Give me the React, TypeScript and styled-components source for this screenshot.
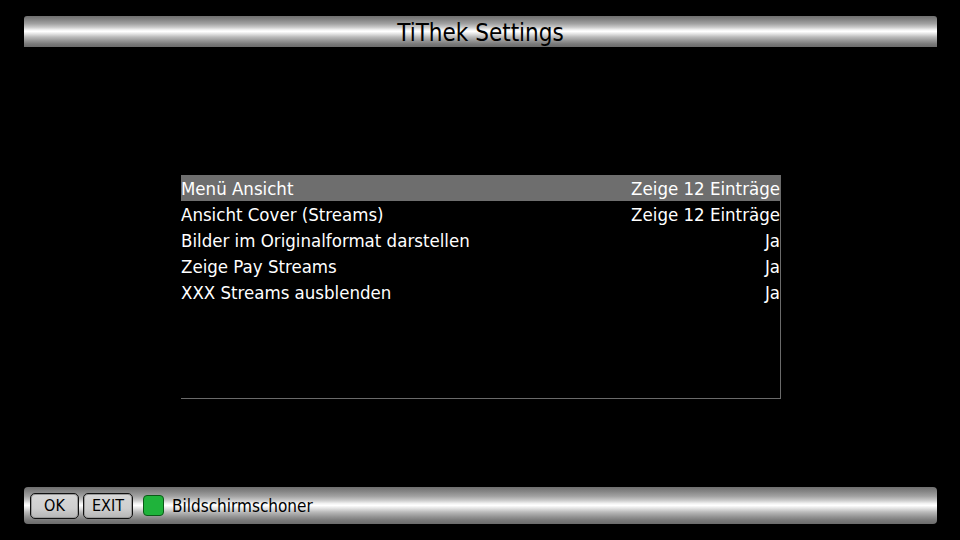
import React from "react";
import styled, { createGlobalStyle } from "styled-components";

const Global = createGlobalStyle`
  html, body { margin: 0; padding: 0; background: #000; }
  body { width: 960px; height: 540px; overflow: hidden; font-family: "DejaVu Sans Condensed", "DejaVu Sans", sans-serif; }
`;

const Screen = styled.div`
  width: 960px;
  height: 540px;
  background: #000;
  display: flex;
  flex-direction: column;
  box-sizing: border-box;
  padding: 16px 23px 16px 24px;
`;

const chrome = `linear-gradient(to bottom,
  #6f6f6f 0%, #858585 12%, #a2a2a2 25%, #c9c9c9 36%, #f4f4f4 45%, #ffffff 50%,
  #e2e2e2 58%, #b9b9b9 68%, #959595 80%, #7a7a7a 90%, #6b6b6b 100%)`;

const TitleBar = styled.div`
  height: 31px;
  background: ${chrome};
  border-radius: 3px 3px 0 0;
  display: flex;
  align-items: center;
  justify-content: center;
`;

const Title = styled.div`
  font-size: 24px;
  color: #000;
  line-height: 31px;
  padding-top: 4px;
`;

const Body = styled.div`
  flex: 1;
  display: flex;
  justify-content: center;
  padding-top: 128px;
`;

const List = styled.div`
  width: 599px;
  height: 223px;
  margin-left: 1px;
  border-right: 1px solid #6a6a6a;
  border-bottom: 1px solid #6a6a6a;
  display: flex;
  flex-direction: column;
`;

const Row = styled.div<{ $active?: boolean }>`
  height: 26px;
  display: flex;
  justify-content: space-between;
  align-items: center;
  background: ${(p) => (p.$active ? "#6e6e6e" : "transparent")};
  color: #fff;
  font-size: 18.5px;
  line-height: 26px;
`;

const Cell = styled.span`
  padding-top: 1px;
`;

const BottomBar = styled.div`
  height: 37px;
  background: ${chrome};
  border-radius: 4px;
  display: flex;
  align-items: center;
  padding-left: 6px;
  gap: 4px;
`;

const Key = styled.div<{ $w: number }>`
  width: ${(p) => p.$w}px;
  height: 26px;
  box-sizing: border-box;
  border: 1px solid #111;
  border-radius: 5px;
  background: linear-gradient(to bottom, #d8d8d8 0%, #cfcfcf 60%, #b5b5b5 100%);
  box-shadow: inset 0 0 0 1px #9a9a9a;
  display: flex;
  align-items: center;
  justify-content: center;
  font-size: 16px;
  color: #000;
`;

const Green = styled.div`
  width: 21px;
  height: 21px;
  margin-left: 6px;
  border-radius: 4px;
  background: #1fb33b;
  border: 1px solid #0b5a18;
  box-sizing: border-box;
`;

const Label = styled.span`
  margin-left: 4px;
  font-size: 17px;
  color: #000;
`;

const rows = [
  ["Menü Ansicht", "Zeige 12 Einträge"],
  ["Ansicht Cover (Streams)", "Zeige 12 Einträge"],
  ["Bilder im Originalformat darstellen", "Ja"],
  ["Zeige Pay Streams", "Ja"],
  ["XXX Streams ausblenden", "Ja"],
];

export default function App() {
  return (
    <>
      <Global />
      <Screen>
        <TitleBar>
          <Title>TiThek Settings</Title>
        </TitleBar>
        <Body>
          <List>
            {rows.map(([l, r], i) => (
              <Row key={l} $active={i === 0}>
                <Cell>{l}</Cell>
                <Cell>{r}</Cell>
              </Row>
            ))}
          </List>
        </Body>
        <BottomBar>
          <Key $w={49}>OK</Key>
          <Key $w={50}>EXIT</Key>
          <Green />
          <Label>Bildschirmschoner</Label>
        </BottomBar>
      </Screen>
    </>
  );
}
